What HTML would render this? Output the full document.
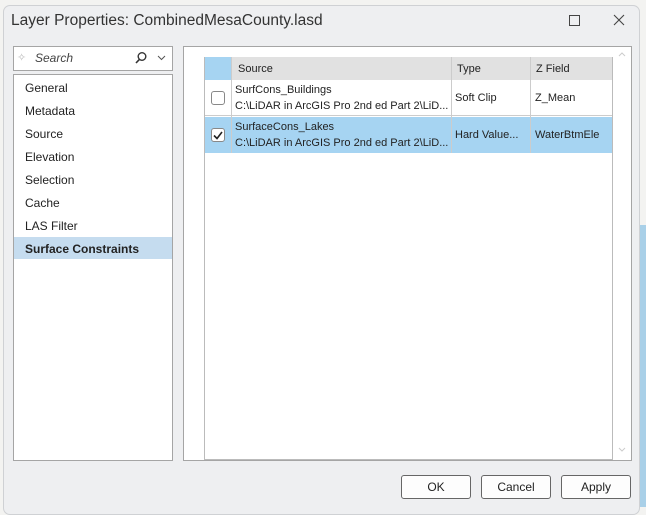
<!DOCTYPE html>
<html><head><style>
*{box-sizing:border-box;margin:0;padding:0}
body{width:646px;height:507px;overflow:hidden;background:#f3f3f1;font-family:"Liberation Sans",sans-serif;position:relative;font-size:12px;color:#222}
.abs{position:absolute}
.dlg{left:3px;top:5px;width:637px;height:510px;background:#eeeff1;border:1px solid #cfd1d4;border-radius:7px}
.t{font-size:15.5px;color:#333;left:11px;top:12px}
.nav div{position:absolute;left:11px;font-size:12px;color:#222}
.cell{position:absolute;font-size:11px;color:#222;white-space:nowrap}
.btn{position:absolute;top:475px;width:70px;height:24px;border:1px solid #666;border-radius:3px;background:#fdfdfd;text-align:center;line-height:22px;font-size:12px}
</style></head><body>
<div class="abs" style="left:640px;top:225px;width:6px;height:282px;background:#a9d0e8"></div>
<div class="abs dlg"></div>
<div class="abs t">Layer Properties: CombinedMesaCounty.lasd</div>
<div class="abs" style="left:569px;top:15px;width:11px;height:11px;border:1px solid #444"></div>
<svg class="abs" style="left:613px;top:14px" width="12" height="12"><path d="M1 1L11 11M11 1L1 11" stroke="#444" stroke-width="1.1"/></svg>
<!-- search -->
<div class="abs" style="left:13px;top:46px;width:160px;height:25px;background:#fff;border:1px solid #a5a5a5"></div>
<div class="abs" style="left:17px;top:51px;font-size:11px;color:#bbb">✧</div>
<div class="abs" style="left:35px;top:51px;font-size:12px;font-style:italic;color:#444">Search</div>
<svg class="abs" style="left:134px;top:51px" width="14" height="14"><circle cx="8" cy="5.5" r="3.8" fill="none" stroke="#333" stroke-width="1.4"/><path d="M5.5 8.3L2 12" stroke="#333" stroke-width="1.6"/></svg>
<svg class="abs" style="left:157px;top:55px" width="9" height="6"><path d="M1 1L4.5 4.5L8 1" fill="none" stroke="#555"/></svg>
<!-- nav -->
<div class="abs nav" style="left:13px;top:74px;width:160px;height:387px;background:#fff;border:1px solid #a5a5a5">
<div style="top:6px">General</div><div style="top:29px">Metadata</div><div style="top:52px">Source</div><div style="top:75px">Elevation</div><div style="top:98px">Selection</div><div style="top:121px">Cache</div><div style="top:144px">LAS Filter</div>
<div style="left:0;top:162px;width:158px;height:22px;background:#c5dcef"></div>
<div style="top:167px;font-weight:bold">Surface Constraints</div>
</div>
<!-- right panel -->
<div class="abs" style="left:183px;top:46px;width:449px;height:415px;background:#fff;border:1px solid #a5a5a5"></div>
<div class="abs" style="left:204px;top:57px;width:409px;height:403px;border:1px solid #bbb;border-top:none"></div>
<div class="abs" style="left:205px;top:57px;width:407px;height:23px;background:#e1e1e1"></div>
<div class="abs" style="left:205px;top:57px;width:27px;height:23px;background:#a6d4f2"></div>
<div class="abs" style="left:205px;top:80px;width:407px;height:36px;background:#fff;border-bottom:1px solid #ccc"></div>
<div class="abs" style="left:205px;top:117px;width:407px;height:36px;background:#a6d4f2"></div>
<div class="abs" style="left:231px;top:57px;width:1px;height:96px;background:#ccc"></div>
<div class="abs" style="left:451px;top:57px;width:1px;height:96px;background:#ccc"></div>
<div class="abs" style="left:530px;top:57px;width:1px;height:96px;background:#ccc"></div>
<div class="cell" style="left:238px;top:63px">Source</div>
<div class="cell" style="left:457px;top:63px">Type</div>
<div class="cell" style="left:536px;top:63px">Z Field</div>
<div class="abs" style="left:211px;top:91px;width:14px;height:14px;border:1px solid #888;border-radius:3px;background:#fff"></div>
<div class="cell" style="left:235px;top:84px">SurfCons_Buildings</div>
<div class="cell" style="left:235px;top:100px">C:\LiDAR in ArcGIS Pro 2nd ed Part 2\LiD...</div>
<div class="cell" style="left:455px;top:92px">Soft Clip</div>
<div class="cell" style="left:535px;top:92px">Z_Mean</div>
<div class="abs" style="left:211px;top:128px;width:14px;height:14px;border:1px solid #888;border-radius:3px;background:#fff"></div>
<svg class="abs" style="left:212px;top:129px" width="12" height="12"><path d="M2 6.5L5 9.5L10 3" fill="none" stroke="#222" stroke-width="1.6"/></svg>
<div class="cell" style="left:235px;top:121px">SurfaceCons_Lakes</div>
<div class="cell" style="left:235px;top:137px">C:\LiDAR in ArcGIS Pro 2nd ed Part 2\LiD...</div>
<div class="cell" style="left:455px;top:129px">Hard Value...</div>
<div class="cell" style="left:535px;top:129px">WaterBtmEle</div>
<svg class="abs" style="left:618px;top:52px" width="8" height="5"><path d="M1 4L4 1L7 4" fill="none" stroke="#ccc"/></svg>
<svg class="abs" style="left:618px;top:447px" width="8" height="5"><path d="M1 1L4 4L7 1" fill="none" stroke="#ccc"/></svg>
<div class="btn" style="left:401px">OK</div>
<div class="btn" style="left:481px">Cancel</div>
<div class="btn" style="left:561px">Apply</div>
</body></html>
